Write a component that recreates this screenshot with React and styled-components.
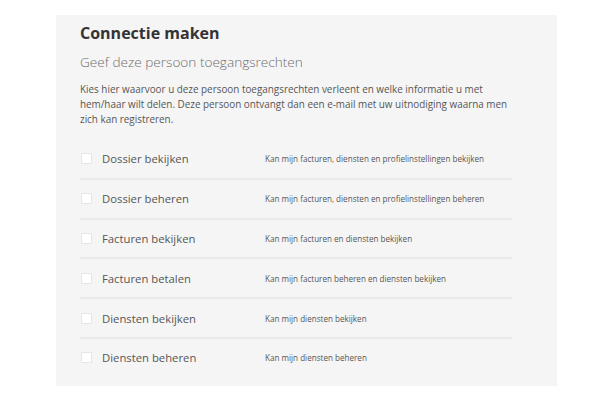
import styled, { createGlobalStyle } from 'styled-components'

const GlobalStyle = createGlobalStyle`
  body {
    margin: 0;
    background: #ffffff;
    font-family: 'Open Sans', 'Liberation Sans', sans-serif;
  }
`

const Page = styled.div`
  width: 600px;
  height: 400px;
  padding: 15px 0 0 56px;
  box-sizing: border-box;
`

const Panel = styled.section`
  width: 501px;
  height: 371px;
  box-sizing: border-box;
  background: #f5f5f5;
  padding: 6px 45px 0 24px;
`

const Title = styled.h1`
  margin: 0;
  font-size: 16px;
  font-weight: 700;
  color: #333333;
  line-height: 24px;
`

const Subtitle = styled.h2`
  margin: 7px 0 0;
  font-size: 13.6px;
  font-weight: 300;
  color: #6f6f6f;
  line-height: 20px;
`

const Intro = styled.p`
  margin: 10px -10px 0 0;
  font-size: 9.9px;
  line-height: 15px;
  color: #555555;
`

const List = styled.div`
  margin-top: 13px;
  display: flex;
  flex-direction: column;
`

const Row = styled.label`
  display: grid;
  grid-template-columns: 21px 163px 1fr;
  align-items: center;
  height: 37.8px;
  border-bottom: ${(p) => (p.$last ? 'none' : '2px solid #eaeaea')};
  padding-left: 1px;
`

const Box = styled.span`
  width: 11px;
  height: 11px;
  box-sizing: border-box;
  background: #ffffff;
  border: 1px solid #e6e6e6;
`

const Label = styled.span`
  font-size: 11.3px;
  color: #555555;
`

const Desc = styled.span`
  font-size: 8.1px;
  color: #555555;
`

const rights = [
  ['Dossier bekijken', 'Kan mijn facturen, diensten en profielinstellingen bekijken'],
  ['Dossier beheren', 'Kan mijn facturen, diensten en profielinstellingen beheren'],
  ['Facturen bekijken', 'Kan mijn facturen en diensten bekijken'],
  ['Facturen betalen', 'Kan mijn facturen beheren en diensten bekijken'],
  ['Diensten bekijken', 'Kan mijn diensten bekijken'],
  ['Diensten beheren', 'Kan mijn diensten beheren']
]

export default function App() {
  return (
    <Page>
      <GlobalStyle />
      <Panel>
        <Title>Connectie maken</Title>
        <Subtitle>Geef deze persoon toegangsrechten</Subtitle>
        <Intro>
          Kies hier waarvoor u deze persoon toegangsrechten verleent en welke informatie u met
          hem/haar wilt delen. Deze persoon ontvangt dan een e-mail met uw uitnodiging waarna men
          zich kan registreren.
        </Intro>
        <List>
          {rights.map(([label, desc], i) => (
            <Row key={label} $last={i === rights.length - 1}>
              <Box />
              <Label>{label}</Label>
              <Desc>{desc}</Desc>
            </Row>
          ))}
        </List>
      </Panel>
    </Page>
  )
}
